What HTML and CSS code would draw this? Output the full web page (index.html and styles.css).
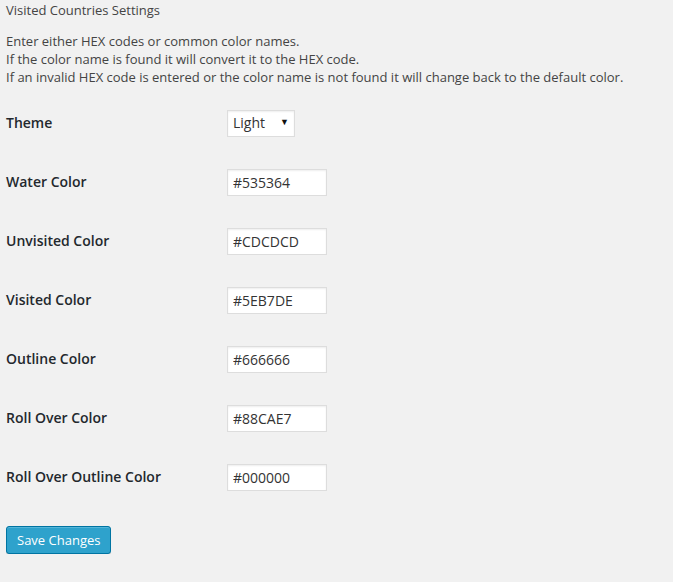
FILE: index.html
```html
<!DOCTYPE html>
<html lang="en">
<head>
    <meta charset="UTF-8">
    <meta name="viewport" content="width=device-width, initial-scale=1.0">
    <title>Visited Countries Settings</title>
    <link rel="stylesheet" href="styles.css">
</head>
<body>
    <div class="wrap">
        <div class="page-title">Visited Countries Settings</div>
        <p class="intro">
            Enter either HEX codes or common color names.<br>
            If the color name is found it will convert it to the HEX code.<br>
            If an invalid HEX code is entered or the color name is not found it will change back to the default color.
        </p>
        <form class="settings" onsubmit="return false;">
            <div class="field">
                <label for="vc-theme">Theme</label>
                <div class="select-wrap">
                    <select id="vc-theme">
                        <option>Light</option>
                        <option>Dark</option>
                    </select>
                    <span class="arrow">&#9660;</span>
                </div>
            </div>
            <div class="field">
                <label for="vc-water">Water Color</label>
                <input type="text" id="vc-water" value="#535364">
            </div>
            <div class="field">
                <label for="vc-unvisited">Unvisited Color</label>
                <input type="text" id="vc-unvisited" value="#CDCDCD">
            </div>
            <div class="field">
                <label for="vc-visited">Visited Color</label>
                <input type="text" id="vc-visited" value="#5EB7DE">
            </div>
            <div class="field">
                <label for="vc-outline">Outline Color</label>
                <input type="text" id="vc-outline" value="#666666">
            </div>
            <div class="field">
                <label for="vc-rollover">Roll Over Color</label>
                <input type="text" id="vc-rollover" value="#88CAE7">
            </div>
            <div class="field">
                <label for="vc-rollover-outline">Roll Over Outline Color</label>
                <input type="text" id="vc-rollover-outline" value="#000000">
            </div>
            <p class="submit">
                <button type="submit" class="button-primary">Save Changes</button>
            </p>
        </form>
    </div>
</body>
</html>
```

FILE: styles.css
```css
body {
    margin: 0;
    padding: 0;
    background: #f1f1f1;
    font-family: 'Open Sans', sans-serif;
    font-size: 13px;
    line-height: 18px;
    color: #444;
}
.wrap {
    padding: 1px 6px 0;
}
.page-title {
    margin: 0;
}
.intro {
    margin: 13px 0 8px;
}
.field {
    display: flex;
    align-items: center;
    height: 59px;
}
.field label {
    width: 221px;
    padding-bottom: 2px;
    font-size: 14px;
    font-weight: 600;
    color: #23282d;
}
input[type="text"], select {
    box-sizing: border-box;
    height: 27px;
    padding: 3px 5px;
    border: 1px solid #ddd;
    background: #fff;
    box-shadow: inset 0 1px 2px rgba(0, 0, 0, 0.07);
    font-family: 'Open Sans', sans-serif;
    font-size: 14px;
    color: #333;
    border-radius: 0;
    outline: none;
}
input[type="text"] {
    width: 100px;
}
.select-wrap {
    position: relative;
    margin-bottom: 1px;
}
select {
    width: 68px;
    padding: 2px 5px 4px;
    -webkit-appearance: none;
    appearance: none;
}
.arrow {
    position: absolute;
    right: 6px;
    top: 6px;
    font-size: 9px;
    line-height: 12px;
    color: #111;
    pointer-events: none;
}
.submit {
    margin: 19px 0 0;
}
.button-primary {
    height: 28px;
    padding: 0 10px 1px;
    background: #2ea2cc;
    border: 1px solid #0074a2;
    border-radius: 3px;
    box-shadow: inset 0 1px 0 rgba(120, 200, 230, 0.5), 0 1px 0 rgba(0, 0, 0, 0.15);
    color: #fff;
    font-family: 'Open Sans', sans-serif;
    font-size: 13px;
    cursor: pointer;
}
.button-primary:hover {
    background: #1e8cbe;
}
```
